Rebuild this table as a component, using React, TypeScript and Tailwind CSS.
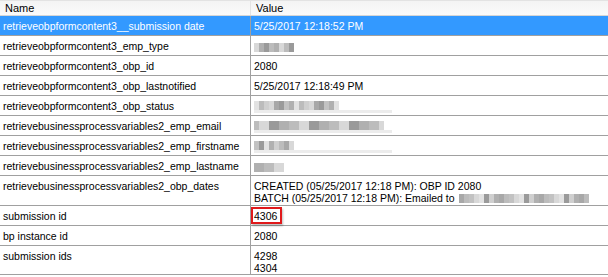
import React from "react";

type Row = {
  name: string;
  value?: React.ReactNode;
  selected?: boolean;
  h: string;
};

const shades = ["#cfcfcf", "#b0b0b0", "#e2e2e2", "#9a9a9a", "#c2c2c2", "#d8d8d8", "#a8a8a8", "#bcbcbc"];

// pixelated gray blocks standing in for the redacted values
function Blur({ blocks, seed, bar = 0 }: { blocks: number; seed: number; bar?: number }) {
  return (
    <span className="inline-flex flex-col align-middle">
      <span className="flex">
        {Array.from({ length: blocks }).map((_, i) => (
          <span
            key={i}
            className="w-[5px] h-[9px]"
            style={{ backgroundColor: shades[(i * 3 + seed * 5 + (i % 2) * seed) % shades.length] }}
          />
        ))}
      </span>
      {bar > 0 && <span className="h-[3px] bg-[#ececec]" style={{ width: bar }} />}
    </span>
  );
}

const rows: Row[] = [
  { name: "retrieveobpformcontent3__submission date", value: "5/25/2017 12:18:52 PM", selected: true, h: "h-[20px]" },
  { name: "retrieveobpformcontent3_emp_type", value: <Blur blocks={8} seed={1} />, h: "h-[20px]" },
  { name: "retrieveobpformcontent3_obp_id", value: "2080", h: "h-[20px]" },
  { name: "retrieveobpformcontent3_obp_lastnotified", value: "5/25/2017 12:18:49 PM", h: "h-[20px]" },
  { name: "retrieveobpformcontent3_obp_status", value: <Blur blocks={17} seed={2} bar={138} />, h: "h-[20px]" },
  { name: "retrievebusinessprocessvariables2_emp_email", value: <Blur blocks={26} seed={3} bar={138} />, h: "h-[20px]" },
  { name: "retrievebusinessprocessvariables2_emp_firstname", value: <Blur blocks={8} seed={4} bar={138} />, h: "h-[20px]" },
  { name: "retrievebusinessprocessvariables2_emp_lastname", value: <Blur blocks={6} seed={5} />, h: "h-[20px]" },
  {
    name: "retrievebusinessprocessvariables2_obp_dates",
    value: (
      <div className="leading-[12px]">
        <div>CREATED (05/25/2017 12:18 PM): OBP ID 2080</div>
        <div className="flex items-center gap-[4px]">
          BATCH (05/25/2017 12:18 PM): Emailed to <Blur blocks={26} seed={6} />
        </div>
      </div>
    ),
    h: "h-[30px]",
  },
  {
    name: "submission id",
    value: (
      <span className="relative">
        4306
        <span className="absolute left-[-3px] right-[-5px] top-[-3px] bottom-[-2px] border-2 border-[#e0191b] shadow-[1px_2px_2px_rgba(0,0,0,0.25)]" />
      </span>
    ),
    h: "h-[20px]",
  },
  { name: "bp instance id", value: "2080", h: "h-[20px]" },
  {
    name: "submission ids",
    value: (
      <div className="leading-[12px]">
        <div>4298</div>
        <div>4304</div>
      </div>
    ),
    h: "h-[29px]",
  },
];

export default function App() {
  return (
    <div className="w-[608px] h-[277px] bg-white overflow-hidden text-[10.5px] leading-[13px] text-black font-['Liberation_Sans',Arial,sans-serif]">
      {/* Column header */}
      <div className="flex h-[16px] text-[11px] bg-gradient-to-b from-[#f4f4f4] to-[#fbfbfb] border-t border-[#e3e3e3] border-b border-b-[#d6d6d6]">
        <div className="w-[251px] pl-[5px] border-r border-[#e4e4e4] leading-[14px]">Name</div>
        <div className="flex-1 pl-[5px] leading-[14px]">Value</div>
      </div>

      {rows.map((r, i) => (
        <div
          key={i}
          className={`flex border-b border-[#a0a0a0] ${r.h} ${r.selected ? "bg-[#3399ff] text-white" : ""}`}
        >
          <div className="w-[251px] shrink-0 pl-[3px] pt-[4px] border-r border-[#a0a0a0] whitespace-nowrap">
            {r.name}
          </div>
          <div className="flex-1 pl-[3px] pt-[4px] whitespace-nowrap">{r.value}</div>
        </div>
      ))}
    </div>
  );
}
